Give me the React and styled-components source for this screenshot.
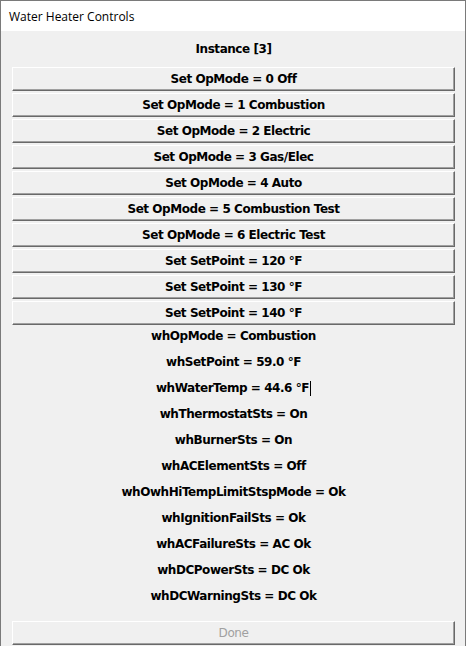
import styled, { createGlobalStyle } from "styled-components";

const GlobalStyle = createGlobalStyle`
  html, body {
    margin: 0;
    padding: 0;
    background: #f0f0f0;
  }
`;

const Window = styled.div`
  box-sizing: border-box;
  width: 466px;
  height: 646px;
  border: 1px solid #7a7a7a;
  border-bottom: none;
  background: #f0f0f0;
  display: flex;
  flex-direction: column;
  overflow: hidden;
`;

const TitleBar = styled.div`
  height: 30px;
  flex-shrink: 0;
  background: #ffffff;
  display: flex;
  align-items: center;
  padding-left: 8px;
  font-family: "Open Sans", "Noto Sans", sans-serif;
  font-size: 12px;
  color: #000;
`;

const Body = styled.div`
  display: flex;
  flex-direction: column;
  padding: 0 10px 0 11px;
  font-family: "DejaVu Sans", Verdana, sans-serif;
  font-weight: bold;
  font-size: 12px;
  letter-spacing: -0.45px;
  color: #000;
`;

const Heading = styled.div`
  height: 36px;
  display: flex;
  align-items: center;
  justify-content: center;
`;

const ButtonList = styled.div`
  display: flex;
  flex-direction: column;
  gap: 2px;
`;

const Button = styled.button`
  box-sizing: border-box;
  height: 24px;
  width: 100%;
  margin: 0;
  padding: 0;
  background: #f0f0f0;
  border: 1px solid;
  border-color: #ffffff #696969 #696969 #ffffff;
  box-shadow: inset -1px -1px 0 #a0a0a0;
  font-family: inherit;
  letter-spacing: inherit;
  font-weight: ${(p) => (p.$disabled ? "normal" : "bold")};
  font-size: 12px;
  color: ${(p) => (p.$disabled ? "#a0a0a0" : "#000")};
  text-align: center;
  cursor: default;
`;

const Status = styled.div`
  box-sizing: border-box;
  height: 26px;
  padding-bottom: 4px;
  display: flex;
  align-items: center;
  justify-content: center;
`;

const Caret = styled.span`
  display: inline-block;
  width: 0;
  height: 15px;
  border-left: 1px solid #000;
  margin-left: 1px;
`;

const Footer = styled.div`
  padding-top: 10px;
`;

const commands = [
  "Set OpMode = 0 Off",
  "Set OpMode = 1 Combustion",
  "Set OpMode = 2 Electric",
  "Set OpMode = 3 Gas/Elec",
  "Set OpMode = 4 Auto",
  "Set OpMode = 5 Combustion Test",
  "Set OpMode = 6 Electric Test",
  "Set SetPoint = 120 °F",
  "Set SetPoint = 130 °F",
  "Set SetPoint = 140 °F",
];

const statuses = [
  "whOpMode = Combustion",
  "whSetPoint = 59.0 °F",
  "whWaterTemp = 44.6 °F",
  "whThermostatSts = On",
  "whBurnerSts = On",
  "whACElementSts = Off",
  "whOwhHiTempLimitStspMode = Ok",
  "whIgnitionFailSts = Ok",
  "whACFailureSts = AC Ok",
  "whDCPowerSts = DC Ok",
  "whDCWarningSts = DC Ok",
];

export default function App() {
  return (
    <>
      <GlobalStyle />
      <Window>
        <TitleBar>Water Heater Controls</TitleBar>
        <Body>
          <Heading>Instance [3]</Heading>
          <ButtonList>
            {commands.map((c) => (
              <Button key={c}>{c}</Button>
            ))}
          </ButtonList>
          {statuses.map((s, i) => (
            <Status key={s}>
              {s}
              {i === 2 && <Caret />}
            </Status>
          ))}
          <Footer>
            <Button $disabled>Done</Button>
          </Footer>
        </Body>
      </Window>
    </>
  );
}
